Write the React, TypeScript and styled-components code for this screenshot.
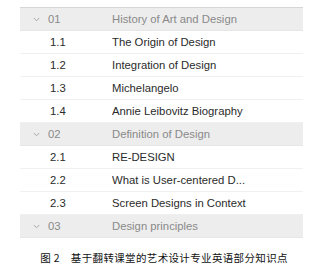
import React from 'react'
import styled, { createGlobalStyle } from 'styled-components'

const GlobalStyle = createGlobalStyle`
    html, body {
        margin: 0;
        padding: 0;
        background: #ffffff;
    }
    body {
        font-family: "Liberation Sans", Arial, sans-serif;
    }
`

const Page = styled.div`
    width: 326px;
    height: 275px;
    padding-top: 7px;
    box-sizing: border-box;
    display: flex;
    flex-direction: column;
    align-items: center;
`

const Table = styled.div`
    width: 283px;
    margin-left: -3px;
    display: flex;
    flex-direction: column;
    border-top: 1px solid #d6d6d6;
`

const Row = styled.div<{ $section?: boolean }>`
    height: 23px;
    display: grid;
    grid-template-columns: 28px 64px 1fr;
    align-items: center;
    box-sizing: border-box;
    background: ${p => (p.$section ? '#ededed' : '#ffffff')};
    border-bottom: 1px solid ${p => (p.$section ? '#e6e6e6' : '#f0f0f0')};
    color: ${p => (p.$section ? '#8a8a8a' : '#2b2b2b')};
    font-size: 11.3px;
`

const Chevron = styled.span`
    display: flex;
    justify-content: flex-end;
    padding-right: 8px;
`

const Num = styled.span<{ $child?: boolean }>`
    padding-left: ${p => (p.$child ? '2px' : '0')};
`

const Title = styled.span`
    white-space: nowrap;
    overflow: hidden;
`

const Caption = styled.div`
    margin-top: 12px;
    margin-left: 2px;
    display: flex;
    gap: 11px;
    font-family: "Noto Sans CJK SC", "Liberation Sans", sans-serif;
    font-size: 10.5px;
    letter-spacing: 0.35px;
    color: #111;
`

const sections = [
    {
        num: '01',
        title: 'History of Art and Design',
        items: [
            ['1.1', 'The Origin of Design'],
            ['1.2', 'Integration of Design'],
            ['1.3', 'Michelangelo'],
            ['1.4', 'Annie Leibovitz Biography'],
        ],
    },
    {
        num: '02',
        title: 'Definition of Design',
        items: [
            ['2.1', 'RE-DESIGN'],
            ['2.2', 'What is User-centered D...'],
            ['2.3', 'Screen Designs in Context'],
        ],
    },
    { num: '03', title: 'Design principles', items: [] as string[][] },
]

const Arrow = () => (
    <svg width="7" height="5" viewBox="0 0 7 5">
        <path d="M0.8 1 L3.5 3.8 L6.2 1" fill="none" stroke="#a9a9a9" strokeWidth="1" />
    </svg>
)

const App = () => (
    <>
        <GlobalStyle />
        <Page>
            <Table>
                {sections.map(s => (
                    <React.Fragment key={s.num}>
                        <Row $section>
                            <Chevron>
                                <Arrow />
                            </Chevron>
                            <Num>{s.num}</Num>
                            <Title>{s.title}</Title>
                        </Row>
                        {s.items.map(([n, t]) => (
                            <Row key={n}>
                                <span />
                                <Num $child>{n}</Num>
                                <Title>{t}</Title>
                            </Row>
                        ))}
                    </React.Fragment>
                ))}
            </Table>
            <Caption>
                <span>图 2</span>
                <span>基于翻转课堂的艺术设计专业英语部分知识点</span>
            </Caption>
        </Page>
    </>
)

export default App
